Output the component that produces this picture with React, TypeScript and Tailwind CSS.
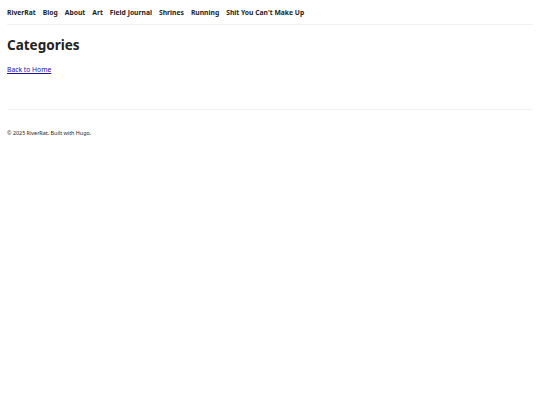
import React from "react";

export default function App() {
  const items = ["RiverRat", "Blog", "About", "Art", "Field Journal", "Shrines", "Running", "Shit You Can't Make Up"];
  return (
    <div className="min-h-screen bg-white px-[7px] text-[#222]" style={{ fontFamily: '"Noto Sans", sans-serif' }}>
      <nav className="flex gap-[7px] border-b border-[#f2f2f2] pt-[8px] pb-[6px] text-[6.75px] font-bold leading-[10px]">
        {items.map((t) => (
          <a key={t} className="text-[#222]">{t}</a>
        ))}
      </nav>
      <main className="pt-[12px] pb-[34px] border-b border-[#f2f2f2]">
        <h1 className="text-[13.5px] font-bold leading-[16px]">Categories</h1>
        <a className="mt-[12px] block text-[6.75px] leading-[10px] text-[#1a0dab] underline">Back to Home</a>
      </main>
      <footer className="pt-[19px] text-[5.4px] leading-[8px]">© 2025 RiverRat. Built with Hugo.</footer>
    </div>
  );
}
